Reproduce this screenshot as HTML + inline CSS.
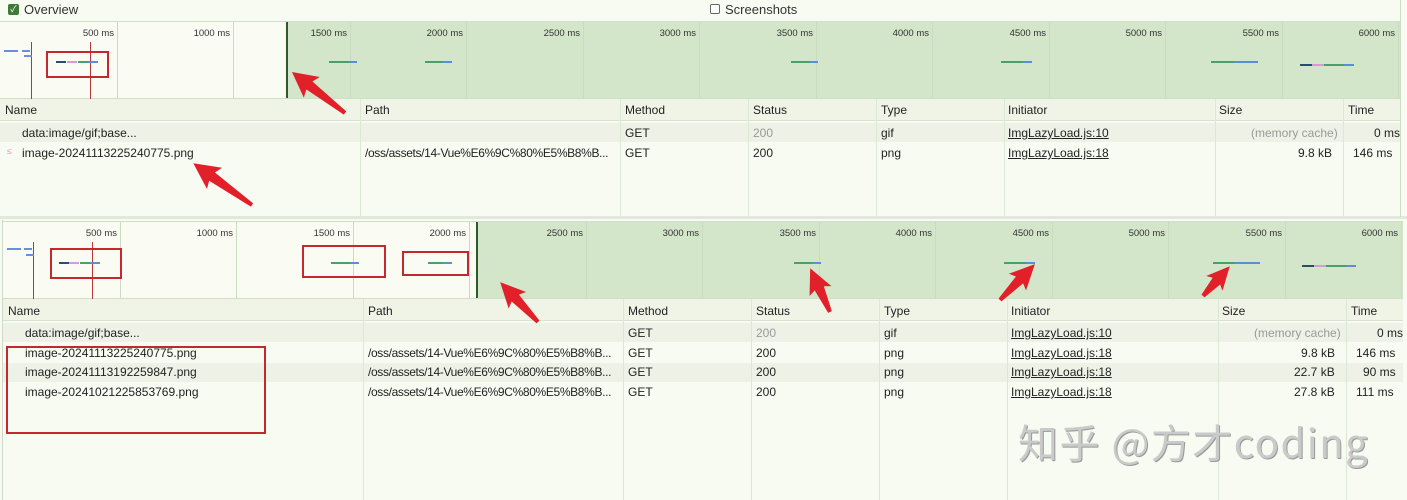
<!DOCTYPE html>
<html><head><meta charset="utf-8"><style>
*{margin:0;padding:0;box-sizing:border-box}
body{width:1407px;height:500px;overflow:hidden;background:#f8fbf1;font-family:"Liberation Sans",Arial,"Noto Sans CJK SC",sans-serif;font-size:12px;color:#222;position:relative}
.a{position:absolute}
.tl{position:absolute;background:#fafcf3;border-top:1px solid #cfe0c6;border-bottom:1px solid #cfe0c6}
.g{position:absolute;top:0;bottom:0;background:#d3e6ca}
.tk{position:absolute;top:0;bottom:0;width:1px;background:#c9dcc0}
.lb{position:absolute;top:6px;font-size:9.5px;color:#333;text-align:right;width:60px}
.hd{position:absolute;background:#eff4e7;border-bottom:1px solid #d6e4cf;height:22px}
.row{position:absolute;height:19px}
.sh{background:#eef2e6}
.vl{position:absolute;width:1px;background:#dbe8d4}
.t{position:absolute;white-space:nowrap}
.p{letter-spacing:-0.35px}
.u{text-decoration:underline}
.box{position:absolute;border:2px solid #c4272d}
.bar{position:absolute;height:2px}
</style></head><body>
<div class="a" style="left:8px;top:4px;width:11px;height:11px;background:#3f7a3b;border-radius:2px;color:#fff;font-size:9px;line-height:11px;text-align:center">✓</div>
<div class="t" style="left:24px;top:2px;font-size:13px;color:#333">Overview</div>
<div class="a" style="left:710px;top:4px;width:10px;height:10px;border:1px solid #666;border-radius:2px;background:#fff"></div>
<div class="t" style="left:725px;top:2px;font-size:13px;color:#333">Screenshots</div>

<div class="tl" style="left:0;top:21px;width:1400px;height:78px">
<div class="g" style="left:288px;right:0"></div>
<div class="a" style="left:286px;top:0;bottom:0;width:2px;background:#2e5a2a"></div>
<div class="tk" style="left:117px"></div><div class="tk" style="left:233px"></div><div class="tk" style="left:350px"></div><div class="tk" style="left:466px"></div><div class="tk" style="left:583px"></div><div class="tk" style="left:699px"></div><div class="tk" style="left:816px"></div><div class="tk" style="left:932px"></div><div class="tk" style="left:1049px"></div><div class="tk" style="left:1165px"></div><div class="tk" style="left:1282px"></div><div class="tk" style="left:1398px"></div>
<div class="lb" style="left:54px">500 ms</div><div class="lb" style="left:170px">1000 ms</div><div class="lb" style="left:287px">1500 ms</div><div class="lb" style="left:403px">2000 ms</div><div class="lb" style="left:520px">2500 ms</div><div class="lb" style="left:636px">3000 ms</div><div class="lb" style="left:753px">3500 ms</div><div class="lb" style="left:869px">4000 ms</div><div class="lb" style="left:986px">4500 ms</div><div class="lb" style="left:1102px">5000 ms</div><div class="lb" style="left:1219px">5500 ms</div><div class="lb" style="left:1335px">6000 ms</div>
<div class="a" style="left:31px;top:20px;width:1px;height:58px;background:#3a5fa8"></div>
<div class="a" style="left:90px;top:20px;width:1px;height:58px;background:#b8383a"></div>
<div class="bar" style="left:4px;top:28px;width:14px;background:#6a8fd8"></div>
<div class="bar" style="left:22px;top:28px;width:8px;background:#6a8fd8"></div>
<div class="bar" style="left:24px;top:33px;width:8px;background:#6a8fd8"></div>
<div class="bar" style="left:56px;top:39px;width:10px;background:#2a4d6e"></div>
<div class="bar" style="left:67px;top:39px;width:10px;background:#d69ad8"></div>
<div class="bar" style="left:78px;top:39px;width:10px;background:#4aa06a"></div>
<div class="bar" style="left:88px;top:39px;width:10px;background:#5b8ed8"></div>
<div class="bar" style="left:329px;top:39px;width:20px;background:#4aa06a"></div><div class="bar" style="left:349px;top:39px;width:8px;background:#5b8ed8"></div>
<div class="bar" style="left:425px;top:39px;width:18px;background:#4aa06a"></div><div class="bar" style="left:443px;top:39px;width:9px;background:#5b8ed8"></div>
<div class="bar" style="left:791px;top:39px;width:18px;background:#4aa06a"></div><div class="bar" style="left:809px;top:39px;width:9px;background:#5b8ed8"></div>
<div class="bar" style="left:1001px;top:39px;width:22px;background:#4aa06a"></div><div class="bar" style="left:1023px;top:39px;width:9px;background:#5b8ed8"></div>
<div class="bar" style="left:1211px;top:39px;width:22px;background:#4aa06a"></div><div class="bar" style="left:1233px;top:39px;width:25px;background:#5b8ed8"></div>
<div class="bar" style="left:1300px;top:42px;width:12px;background:#2a4d6e"></div><div class="bar" style="left:1312px;top:42px;width:12px;background:#d69ad8"></div><div class="bar" style="left:1324px;top:42px;width:20px;background:#4aa06a"></div><div class="bar" style="left:1344px;top:42px;width:10px;background:#5b8ed8"></div>
</div>
<div class="box" style="left:46px;top:51px;width:63px;height:27px"></div>

<div class="hd" style="left:0;top:99px;width:1400px"></div>
<div class="row sh" style="left:0;top:123px;width:1400px"></div>
<div class="vl" style="left:360px;top:99px;height:118px"></div><div class="vl" style="left:620px;top:99px;height:118px"></div><div class="vl" style="left:748px;top:99px;height:118px"></div><div class="vl" style="left:876px;top:99px;height:118px"></div><div class="vl" style="left:1004px;top:99px;height:118px"></div><div class="vl" style="left:1215px;top:99px;height:118px"></div><div class="vl" style="left:1343px;top:99px;height:118px"></div>
<div class="t" style="left:5px;top:103px">Name</div><div class="t" style="left:365px;top:103px">Path</div><div class="t" style="left:625px;top:103px">Method</div><div class="t" style="left:753px;top:103px">Status</div><div class="t" style="left:881px;top:103px">Type</div><div class="t" style="left:1008px;top:103px">Initiator</div><div class="t" style="left:1219px;top:103px">Size</div><div class="t" style="left:1348px;top:103px">Time</div>
<div class="t" style="left:22px;top:126px">data:image/gif;base...</div><div class="t" style="left:625px;top:126px">GET</div><div class="t" style="left:753px;top:126px;color:#999">200</div><div class="t" style="left:881px;top:126px">gif</div><div class="t u" style="left:1008px;top:126px">ImgLazyLoad.js:10</div><div class="t" style="left:1251px;top:126px;color:#999">(memory cache)</div><div class="t" style="left:1374px;top:126px">0 ms</div>
<div class="t" style="left:7px;top:146px;color:#e0a0a8;font-size:9px">≤</div>
<div class="t" style="left:22px;top:146px">image-20241113225240775.png</div><div class="t p" style="left:365px;top:146px">/oss/assets/14-Vue%E6%9C%80%E5%B8%B...</div><div class="t" style="left:625px;top:146px">GET</div><div class="t" style="left:753px;top:146px">200</div><div class="t" style="left:881px;top:146px">png</div><div class="t u" style="left:1008px;top:146px">ImgLazyLoad.js:18</div><div class="t" style="left:1298px;top:146px">9.8 kB</div><div class="t" style="left:1353px;top:146px">146 ms</div>
<div class="a" style="left:0;top:216px;width:1407px;height:3px;background:#e3e8de"></div>
<div class="a" style="left:1400px;top:0;width:1px;height:217px;background:#cfd9c8"></div>

<div class="tl" style="left:3px;top:221px;width:1400px;height:78px">
<div class="g" style="left:474px;right:0"></div>
<div class="a" style="left:473px;top:0;bottom:0;width:2px;background:#2e5a2a"></div>
<div class="tk" style="left:117px"></div><div class="tk" style="left:233px"></div><div class="tk" style="left:350px"></div><div class="tk" style="left:466px"></div><div class="tk" style="left:583px"></div><div class="tk" style="left:699px"></div><div class="tk" style="left:816px"></div><div class="tk" style="left:932px"></div><div class="tk" style="left:1049px"></div><div class="tk" style="left:1165px"></div><div class="tk" style="left:1282px"></div><div class="tk" style="left:1398px"></div>
<div class="lb" style="left:54px">500 ms</div><div class="lb" style="left:170px">1000 ms</div><div class="lb" style="left:287px">1500 ms</div><div class="lb" style="left:403px">2000 ms</div><div class="lb" style="left:520px">2500 ms</div><div class="lb" style="left:636px">3000 ms</div><div class="lb" style="left:753px">3500 ms</div><div class="lb" style="left:869px">4000 ms</div><div class="lb" style="left:986px">4500 ms</div><div class="lb" style="left:1102px">5000 ms</div><div class="lb" style="left:1219px">5500 ms</div><div class="lb" style="left:1335px">6000 ms</div>
<div class="a" style="left:30px;top:20px;width:1px;height:58px;background:#3a5fa8"></div>
<div class="a" style="left:89px;top:20px;width:1px;height:58px;background:#b8383a"></div>
<div class="bar" style="left:4px;top:26px;width:14px;background:#6a8fd8"></div>
<div class="bar" style="left:21px;top:26px;width:8px;background:#6a8fd8"></div>
<div class="bar" style="left:23px;top:32px;width:8px;background:#6a8fd8"></div>
<div class="bar" style="left:56px;top:40px;width:10px;background:#2a4d6e"></div>
<div class="bar" style="left:66px;top:40px;width:10px;background:#d69ad8"></div>
<div class="bar" style="left:77px;top:40px;width:10px;background:#4aa06a"></div>
<div class="bar" style="left:87px;top:40px;width:10px;background:#5b8ed8"></div>
<div class="bar" style="left:328px;top:40px;width:20px;background:#4aa06a"></div><div class="bar" style="left:348px;top:40px;width:8px;background:#5b8ed8"></div>
<div class="bar" style="left:425px;top:40px;width:15px;background:#4aa06a"></div><div class="bar" style="left:440px;top:40px;width:9px;background:#5b8ed8"></div>
<div class="bar" style="left:791px;top:40px;width:18px;background:#4aa06a"></div><div class="bar" style="left:809px;top:40px;width:9px;background:#5b8ed8"></div>
<div class="bar" style="left:1001px;top:40px;width:22px;background:#4aa06a"></div><div class="bar" style="left:1023px;top:40px;width:9px;background:#5b8ed8"></div>
<div class="bar" style="left:1210px;top:40px;width:22px;background:#4aa06a"></div><div class="bar" style="left:1232px;top:40px;width:25px;background:#5b8ed8"></div>
<div class="bar" style="left:1299px;top:43px;width:12px;background:#2a4d6e"></div><div class="bar" style="left:1311px;top:43px;width:12px;background:#d69ad8"></div><div class="bar" style="left:1323px;top:43px;width:20px;background:#4aa06a"></div><div class="bar" style="left:1343px;top:43px;width:10px;background:#5b8ed8"></div>
</div>
<div class="box" style="left:50px;top:248px;width:72px;height:31px"></div>
<div class="box" style="left:302px;top:245px;width:84px;height:33px"></div>
<div class="box" style="left:402px;top:251px;width:67px;height:25px"></div>

<div class="hd" style="left:3px;top:299px;width:1400px"></div>
<div class="row sh" style="left:3px;top:323px;width:1400px"></div>
<div class="row sh" style="left:3px;top:363px;width:1400px"></div>
<div class="vl" style="left:363px;top:299px;height:201px"></div><div class="vl" style="left:623px;top:299px;height:201px"></div><div class="vl" style="left:751px;top:299px;height:201px"></div><div class="vl" style="left:879px;top:299px;height:201px"></div><div class="vl" style="left:1007px;top:299px;height:201px"></div><div class="vl" style="left:1218px;top:299px;height:201px"></div><div class="vl" style="left:1346px;top:299px;height:201px"></div>
<div class="t" style="left:8px;top:304px">Name</div><div class="t" style="left:368px;top:304px">Path</div><div class="t" style="left:628px;top:304px">Method</div><div class="t" style="left:756px;top:304px">Status</div><div class="t" style="left:884px;top:304px">Type</div><div class="t" style="left:1011px;top:304px">Initiator</div><div class="t" style="left:1222px;top:304px">Size</div><div class="t" style="left:1351px;top:304px">Time</div>
<div class="t" style="left:25px;top:326px">data:image/gif;base...</div><div class="t" style="left:628px;top:326px">GET</div><div class="t" style="left:756px;top:326px;color:#999">200</div><div class="t" style="left:884px;top:326px">gif</div><div class="t u" style="left:1011px;top:326px">ImgLazyLoad.js:10</div><div class="t" style="left:1254px;top:326px;color:#999">(memory cache)</div><div class="t" style="left:1377px;top:326px">0 ms</div>
<div class="t" style="left:25px;top:346px">image-20241113225240775.png</div><div class="t p" style="left:368px;top:346px">/oss/assets/14-Vue%E6%9C%80%E5%B8%B...</div><div class="t" style="left:628px;top:346px">GET</div><div class="t" style="left:756px;top:346px">200</div><div class="t" style="left:884px;top:346px">png</div><div class="t u" style="left:1011px;top:346px">ImgLazyLoad.js:18</div><div class="t" style="left:1301px;top:346px">9.8 kB</div><div class="t" style="left:1356px;top:346px">146 ms</div>
<div class="t" style="left:25px;top:365px">image-20241113192259847.png</div><div class="t p" style="left:368px;top:365px">/oss/assets/14-Vue%E6%9C%80%E5%B8%B...</div><div class="t" style="left:628px;top:365px">GET</div><div class="t" style="left:756px;top:365px">200</div><div class="t" style="left:884px;top:365px">png</div><div class="t u" style="left:1011px;top:365px">ImgLazyLoad.js:18</div><div class="t" style="left:1294px;top:365px">22.7 kB</div><div class="t" style="left:1363px;top:365px">90 ms</div>
<div class="t" style="left:25px;top:385px">image-20241021225853769.png</div><div class="t p" style="left:368px;top:385px">/oss/assets/14-Vue%E6%9C%80%E5%B8%B...</div><div class="t" style="left:628px;top:385px">GET</div><div class="t" style="left:756px;top:385px">200</div><div class="t" style="left:884px;top:385px">png</div><div class="t u" style="left:1011px;top:385px">ImgLazyLoad.js:18</div><div class="t" style="left:1294px;top:385px">27.8 kB</div><div class="t" style="left:1356px;top:385px">111 ms</div>
<div class="box" style="left:6px;top:346px;width:260px;height:88px"></div>
<div class="a" style="left:2px;top:220px;width:1px;height:280px;background:#cfd9c8"></div>

<div class="t" style="left:1018px;top:412px;font-size:40px;color:#cacaca;font-family:'Noto Sans CJK SC','Liberation Sans',sans-serif;text-shadow:1px 1px 0 #999;letter-spacing:1.5px">知乎 @方才coding</div>

<svg class="a" style="left:0;top:0" width="1407" height="500">
<g fill="#e2202a">
<g transform="translate(345,113) rotate(217.7)"><polygon points="0,-2 45,-5 42,-13 67,0 42,13 45,5 0,2"/></g>
<g transform="translate(252,205) rotate(215.4)"><polygon points="0,-2 49,-5 46,-13 72,0 46,13 49,5 0,2"/></g>
<g transform="translate(538,322) rotate(226.5)"><polygon points="0,-2 33,-5 30,-12 55,0 30,12 33,5 0,2"/></g>
<g transform="translate(830,312) rotate(245.6)"><polygon points="0,-2 26,-5 23,-12 48,0 23,12 26,5 0,2"/></g>
<g transform="translate(1000,300) rotate(-45.8)"><polygon points="0,-2 28,-5 25,-12 50,0 25,12 28,5 0,2"/></g>
<g transform="translate(1203,296) rotate(-48)"><polygon points="0,-2 20,-5 17,-11 40,0 17,11 20,5 0,2"/></g>
</g></svg>
</body></html>
